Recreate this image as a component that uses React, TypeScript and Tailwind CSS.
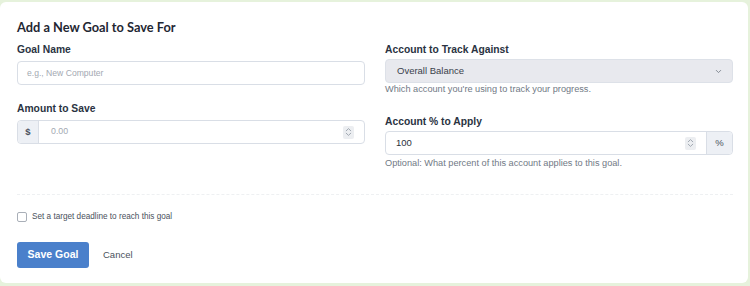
import React from "react";

function Spinner() {
  return (
    <span className="flex h-[13px] w-[11px] items-center justify-center rounded-[2px] bg-[#eceef1]">
      <svg width="7" height="10" viewBox="0 0 7 10" fill="none" stroke="#9aa1ab" strokeWidth="0.9" strokeLinecap="round" strokeLinejoin="round">
        <path d="M1.2 3.8 L3.5 1.6 L5.8 3.8" />
        <path d="M1.2 6.2 L3.5 8.4 L5.8 6.2" />
      </svg>
    </span>
  );
}

export default function App() {
  const font = { fontFamily: '"Liberation Sans", Arial, Helvetica, sans-serif' };
  return (
    <div className="min-h-[286px] w-[750px] bg-[#e6f2dc] pt-[2px] pr-[2px] pb-[3px]" style={font}>
      <div className="flex h-[281px] flex-col rounded-[6px] bg-white pl-[17px] pr-[15px] pt-[16px]">
        <h2 className="text-[12.8px] font-bold leading-[18px] text-[#1f2733]" style={{ fontFamily: 'Lato, "Liberation Sans", sans-serif' }}>
          Add a New Goal to Save For
        </h2>
        <div className="mt-[8px] grid grid-cols-2 gap-x-[20px]">
          <div className="flex flex-col gap-[18px]">
            <div className="flex flex-col">
              <label className="text-[10.3px] font-bold leading-[12px] text-[#2a3342]">Goal Name</label>
              <div className="mt-[5px] flex h-[24px] items-center rounded-[4px] border border-[#d9dee6] px-[9px]">
                <span className="text-[8.6px] text-[#a3a9b2]">e.g., New Computer</span>
              </div>
            </div>
            <div className="flex flex-col">
              <label className="text-[10.3px] font-bold leading-[12px] text-[#2a3342]">Amount to Save</label>
              <div className="mt-[5px] flex h-[24px] items-stretch rounded-[4px] border border-[#d9dee6]">
                <span className="flex w-[21px] items-center justify-center rounded-l-[4px] border-r border-[#d9dee6] bg-[#edf0f5] text-[9.5px] font-bold text-[#4a5260]">$</span>
                <div className="flex flex-1 items-center justify-between pl-[12px] pr-[10px]">
                  <span className="text-[8.8px] text-[#a3a9b2]">0.00</span>
                  <Spinner />
                </div>
              </div>
            </div>
          </div>
          <div className="flex flex-col gap-[21px]">
            <div className="flex flex-col">
              <label className="text-[10.3px] font-bold leading-[12px] text-[#2a3342]">Account to Track Against</label>
              <div className="mt-[3px] flex h-[24px] items-center justify-between rounded-[4px] border border-[#dde1e8] bg-[#e8e9ee] pl-[11px] pr-[10px]">
                <span className="text-[9.5px] text-[#3a414c]">Overall Balance</span>
                <svg width="7" height="5" viewBox="0 0 7 5" fill="none" stroke="#7b828c" strokeWidth="0.9" strokeLinecap="round" strokeLinejoin="round">
                  <path d="M1.3 1.4 L3.5 3.6 L5.7 1.4" />
                </svg>
              </div>
              <p className="mt-[1px] text-[9.2px] leading-[11px] text-[#717985]">Which account you're using to track your progress.</p>
            </div>
            <div className="flex flex-col">
              <label className="text-[10.3px] font-bold leading-[12px] text-[#2a3342]">Account % to Apply</label>
              <div className="mt-[3px] flex h-[24px] items-stretch rounded-[4px] border border-[#d9dee6]">
                <div className="flex flex-1 items-center justify-between pl-[10px] pr-[10px]">
                  <span className="text-[9.5px] text-[#2b313b]">100</span>
                  <Spinner />
                </div>
                <span className="flex w-[26px] items-center justify-center rounded-r-[4px] border-l border-[#d9dee6] bg-[#edf0f5] text-[9.5px] text-[#4a5260]">%</span>
              </div>
              <p className="mt-[3px] text-[9.2px] leading-[11px] text-[#717985]">Optional: What percent of this account applies to this goal.</p>
            </div>
          </div>
        </div>
        <div className="mt-[25px] border-t border-dashed border-[#eef0f2]" />
        <div className="mt-[17px] flex items-center gap-[5px]">
          <span className="h-[10px] w-[10px] rounded-[2px] border border-[#a9afb8] bg-white" />
          <span className="-mt-[2px] text-[8.2px] leading-[11px] text-[#4a515c]">Set a target deadline to reach this goal</span>
        </div>
        <div className="mt-[20px] flex items-center gap-[14px]">
          <button className="h-[26px] w-[72px] rounded-[3px] bg-[#4a80cb] text-[10.5px] font-bold text-white">Save Goal</button>
          <button className="text-[9.5px] text-[#4a515c]">Cancel</button>
        </div>
      </div>
    </div>
  );
}
